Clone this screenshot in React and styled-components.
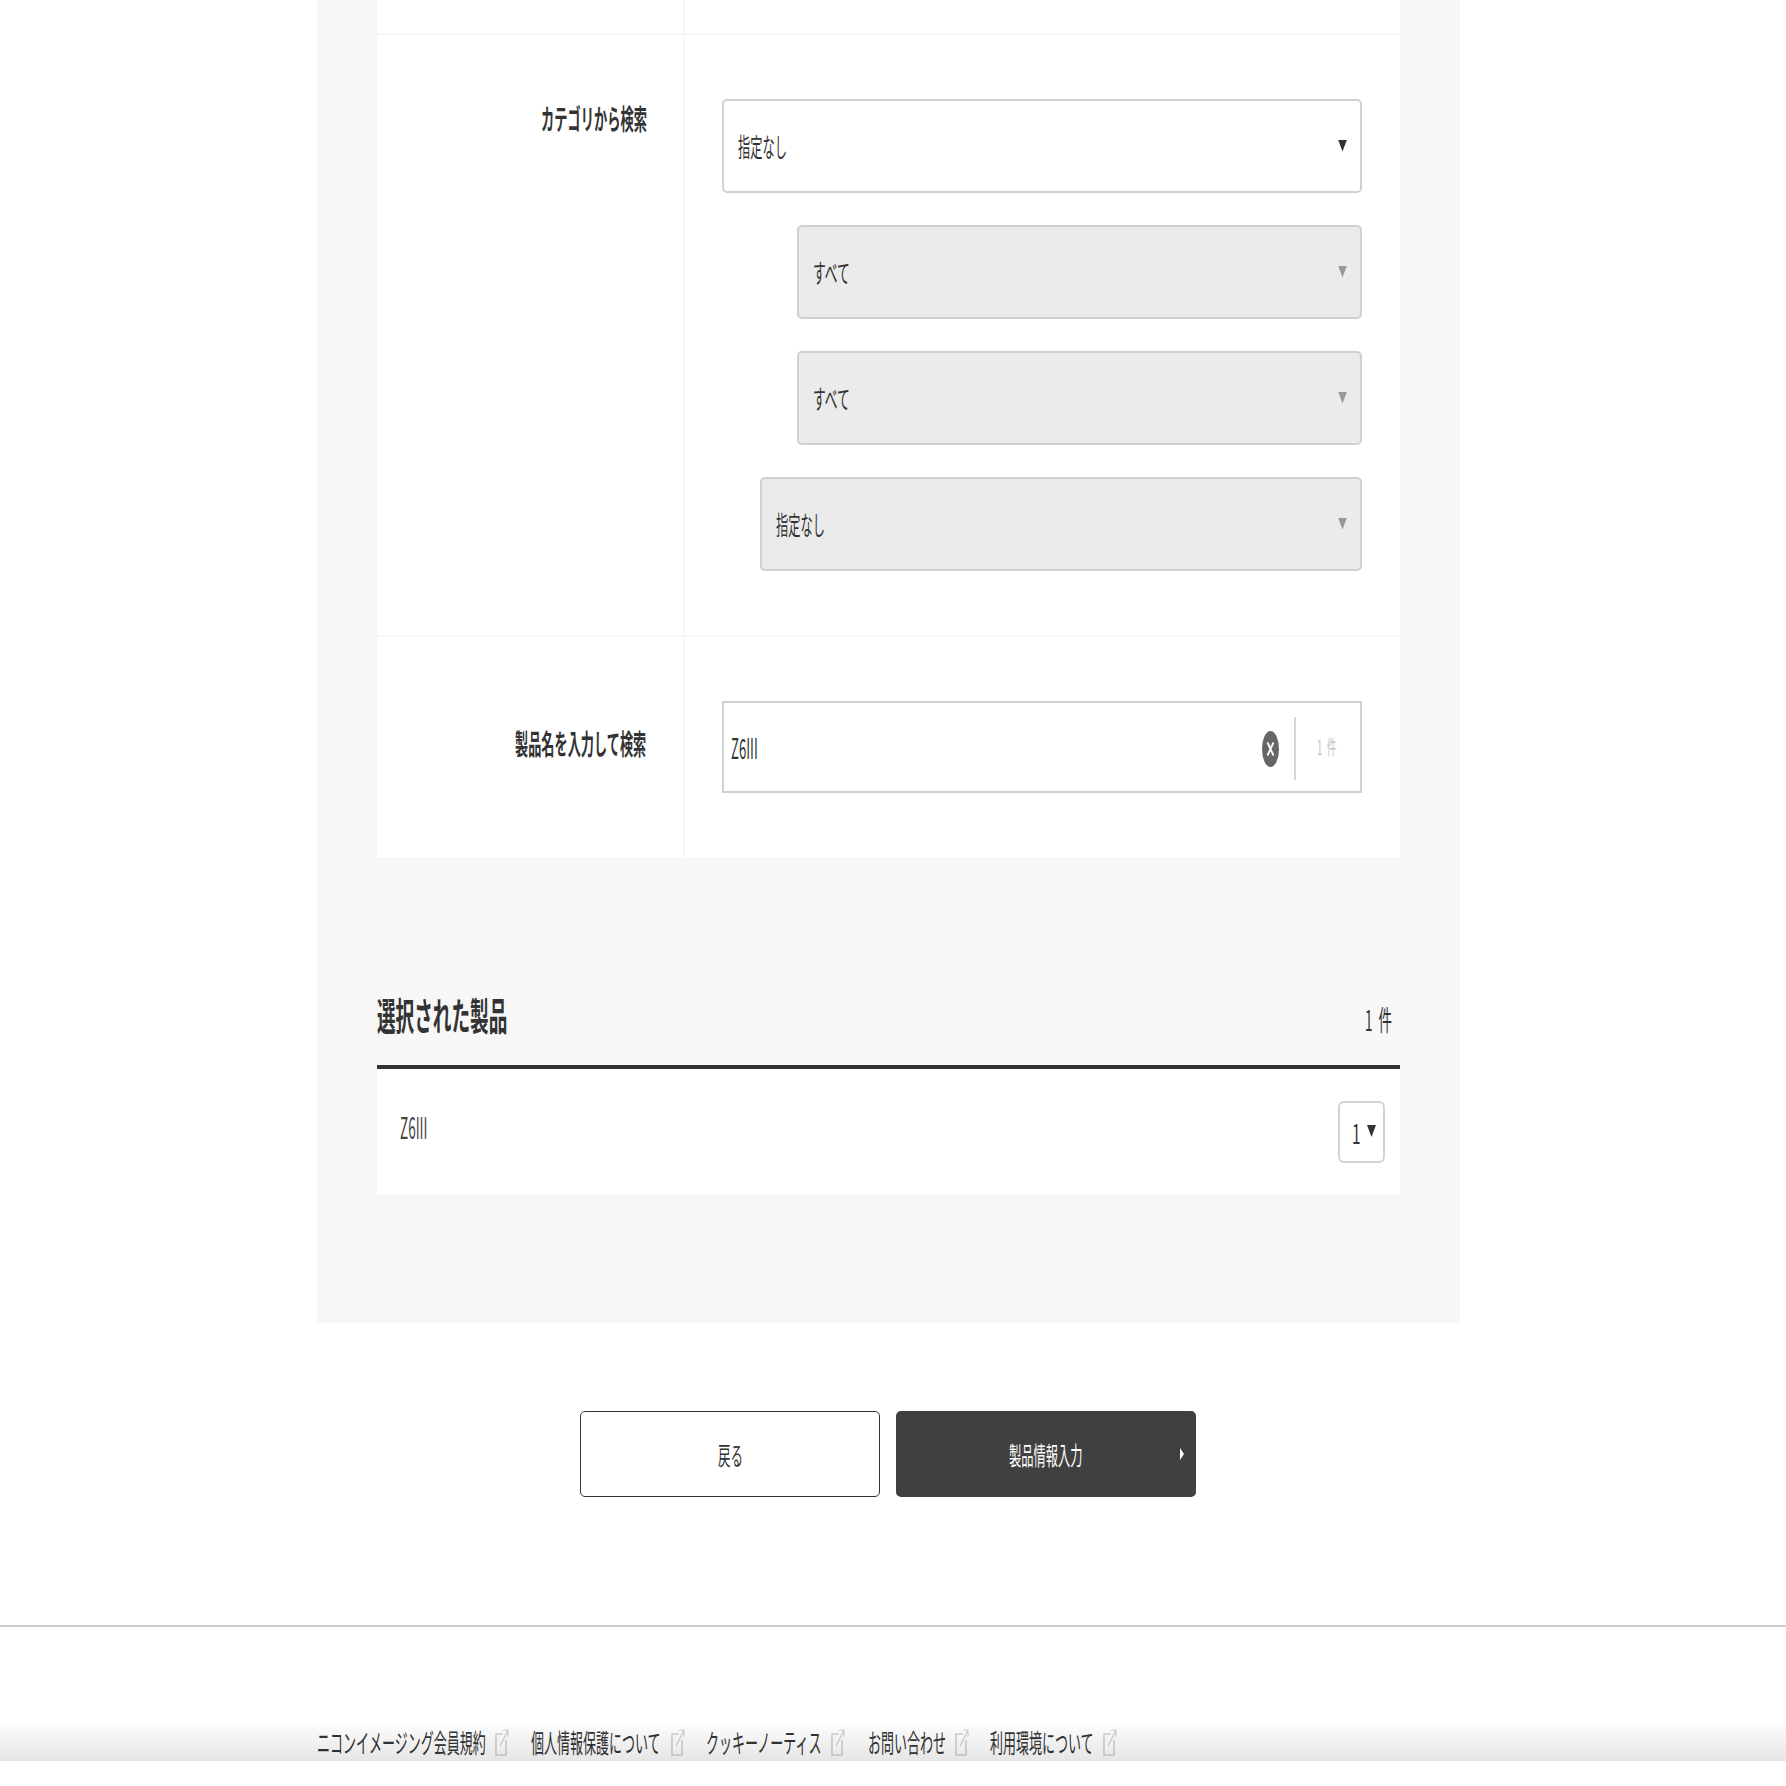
import React from 'react';
import styled, { createGlobalStyle } from 'styled-components';

const GlobalStyle = createGlobalStyle`
  html, body {
    margin: 0;
    padding: 0;
    background: #fff;
  }
  body {
    font-family: "Noto Sans CJK JP", "Noto Sans", sans-serif;
    color: #333;
  }
`;

const App = () => {
  return (
    <Page>
      <GlobalStyle />
      <Panel>
        <Card>
          <Row $h={35}>
            <LabelCol />
            <FieldCol />
          </Row>
          <Row>
            <LabelCol>
              <CategoryLabel $w={106} $sx={0.473}>カテゴリから検索</CategoryLabel>
            </LabelCol>
            <FieldCol>
              <Selects>
                <SelectBox>
                  <SelectText $w={49} $sx={0.47}>指定なし</SelectText>
                  <Arrow />
                </SelectBox>
                <SelectBox $indent={75} $disabled>
                  <SelectText $w={37} $sx={0.49}>すべて</SelectText>
                  <Arrow $disabled />
                </SelectBox>
                <SelectBox $indent={75} $disabled>
                  <SelectText $w={37} $sx={0.49}>すべて</SelectText>
                  <Arrow $disabled />
                </SelectBox>
                <SelectBox $indent={38} $disabled>
                  <SelectText $w={49} $sx={0.47}>指定なし</SelectText>
                  <Arrow $disabled />
                </SelectBox>
              </Selects>
            </FieldCol>
          </Row>
          <Row $last>
            <LabelCol>
              <NameLabel $w={132} $sx={0.47}>製品名を入力して検索</NameLabel>
            </LabelCol>
            <FieldCol>
              <SearchBox>
                <SearchValue $w={27} $sx={0.47}>Z6III</SearchValue>
                <ClearIcon width="17" height="36" viewBox="0 0 17 36">
                  <ellipse cx="8.5" cy="18" rx="8.5" ry="18" fill="#666" />
                  <path d="M5.5 11.5 L11.5 24.5 M11.5 11.5 L5.5 24.5" stroke="#fff" strokeWidth="1.8" fill="none" />
                </ClearIcon>
                <SearchCount>
                  <CountText $w={20} $sx={0.48}>1  件</CountText>
                </SearchCount>
              </SearchBox>
            </FieldCol>
          </Row>
        </Card>

        <SelectedHead>
          <SelectedTitle $w={131} $sx={0.49}>選択された製品</SelectedTitle>
          <SelectedCount $w={26} $sx={0.48}>1  件</SelectedCount>
        </SelectedHead>
        <SelectedList>
          <ProductName $w={27} $sx={0.45}>Z6III</ProductName>
          <QtyBox>
            <QtyText $w={6} $sx={0.55}>1</QtyText>
            <QtyArrow />
          </QtyBox>
        </SelectedList>
      </Panel>

      <Buttons>
        <BackButton>
          <ButtonText $w={25} $sx={0.5}>戻る</ButtonText>
        </BackButton>
        <NextButton>
          <ButtonText $w={74} $sx={0.49}>製品情報入力</ButtonText>
          <NextArrow />
        </NextButton>
      </Buttons>

      <FooterRule />

      <FooterLinks>
        <FooterLink $gap={22}>
          <FooterText $w={169} $sx={0.5}>ニコンイメージング会員規約</FooterText>
          <ExternalIcon />
        </FooterLink>
        <FooterLink $gap={21}>
          <FooterText $w={131} $sx={0.5}>個人情報保護について</FooterText>
          <ExternalIcon />
        </FooterLink>
        <FooterLink $gap={23}>
          <FooterText $w={116} $sx={0.5}>クッキーノーティス</FooterText>
          <ExternalIcon />
        </FooterLink>
        <FooterLink $gap={21}>
          <FooterText $w={78} $sx={0.5}>お問い合わせ</FooterText>
          <ExternalIcon />
        </FooterLink>
        <FooterLink>
          <FooterText $w={104} $sx={0.5}>利用環境について</FooterText>
          <ExternalIcon />
        </FooterLink>
      </FooterLinks>

      <BottomFade />
    </Page>
  );
};

const ExternalIcon = () => (
  <ExternalSvg width="14" height="28" viewBox="0 0 14 28">
    <path d="M8 6 H1 V27 H11 V12" fill="none" stroke="#d0d0d0" strokeWidth="1.5" />
    <path d="M5 18 L13 2 M8 2 H13 V9" fill="none" stroke="#d0d0d0" strokeWidth="1.2" />
  </ExternalSvg>
);

// the whole shot is squeezed sideways, so every text is narrowed and keeps $w as its flow width
const Squeezed = styled.span`
  display: block;
  flex: none;
  white-space: pre;
  width: ${(p) => p.$w / p.$sx}px;
  margin-right: ${(p) => p.$w - p.$w / p.$sx}px;
  transform: scaleX(${(p) => p.$sx});
  transform-origin: left center;
`;

const Page = styled.div`
  position: relative;
  width: 1786px;
  height: 1786px;
  overflow: hidden;
  background: #fff;
`;

const Panel = styled.div`
  width: 1143px;
  height: 1323px;
  margin-left: 317px;
  padding: 0 60px;
  box-sizing: border-box;
  background: #f7f7f7;
`;

const Card = styled.div`
  background: #fff;
`;

const Row = styled.div`
  display: grid;
  grid-template-columns: 308px 1fr;
  height: ${(p) => (p.$h ? `${p.$h}px` : 'auto')};
  border-bottom: ${(p) => (p.$last ? 'none' : '2px solid #f6f6f6')};
  box-sizing: border-box;
`;

const LabelCol = styled.div`
  display: flex;
  justify-content: flex-end;
  padding-right: 36px;
  border-right: 2px solid #f8f8f8;
`;

const FieldCol = styled.div`
  padding: 0 38px 0 37px;
`;

const CategoryLabel = styled(Squeezed)`
  font-size: 28px;
  font-weight: 700;
  line-height: 36px;
  color: #333;
  margin-top: 65px;
`;

const NameLabel = styled(Squeezed)`
  font-size: 28px;
  font-weight: 700;
  line-height: 36px;
  color: #333;
  margin-top: 88px;
`;

const Selects = styled.div`
  display: flex;
  flex-direction: column;
  gap: 32px;
  padding: 64px 0;
`;

const SelectBox = styled.div`
  display: flex;
  align-items: center;
  justify-content: space-between;
  height: 94px;
  margin-left: ${(p) => p.$indent || 0}px;
  padding: 0 13px 0 14px;
  box-sizing: border-box;
  border: 2px solid #d0d0d0;
  border-radius: 5px;
  background: ${(p) => (p.$disabled ? '#ebebeb' : '#fff')};
`;

const SelectText = styled(Squeezed)`
  font-size: 26px;
  line-height: 36px;
  color: #333;
`;

const Arrow = styled.i`
  display: block;
  width: 9px;
  height: 12px;
  margin-top: -1px;
  clip-path: polygon(0 0, 100% 0, 50% 100%);
  background: ${(p) => (p.$disabled ? '#999' : '#333')};
`;

const SearchBox = styled.div`
  display: flex;
  align-items: center;
  height: 92px;
  margin: 64px 0 64px;
  padding-left: 7px;
  box-sizing: border-box;
  border: 2px solid #d0d0d0;
`;

const SearchValue = styled(Squeezed)`
  font-size: 28px;
  line-height: 36px;
  color: #333;
`;

const ClearIcon = styled.svg`
  flex: none;
  margin: 3px 0 0 auto;
`;

const SearchCount = styled.div`
  display: flex;
  align-items: center;
  height: 63px;
  width: 66px;
  margin: 3px 0 0 15px;
  padding-left: 21px;
  box-sizing: border-box;
  border-left: 2px solid #d6d6d6;
`;

const CountText = styled(Squeezed)`
  font-size: 20px;
  line-height: 30px;
  color: #c4c4c4;
  margin-top: -3px;
`;

const SelectedHead = styled.div`
  display: flex;
  align-items: flex-end;
  justify-content: space-between;
  height: 212px;
  padding-right: 9px;
  border-bottom: 4px solid #333;
  box-sizing: border-box;
`;

const SelectedTitle = styled(Squeezed)`
  font-size: 38px;
  font-weight: 700;
  line-height: 48px;
  color: #333;
  margin-bottom: 27px;
`;

const SelectedCount = styled(Squeezed)`
  font-size: 28px;
  line-height: 36px;
  color: #333;
  margin-bottom: 28px;
`;

const SelectedList = styled.div`
  display: flex;
  align-items: flex-start;
  justify-content: space-between;
  height: 126px;
  padding: 32px 15px 0 23px;
  box-sizing: border-box;
  background: #fff;
`;

const ProductName = styled(Squeezed)`
  font-size: 30px;
  line-height: 36px;
  color: #444;
  margin-top: 7px;
`;

const QtyBox = styled.div`
  display: flex;
  align-items: center;
  width: 47px;
  height: 62px;
  padding-left: 12px;
  box-sizing: border-box;
  border: 2px solid #d2d2d2;
  border-radius: 6px;
`;

const QtyText = styled(Squeezed)`
  font-size: 28px;
  line-height: 36px;
  color: #333;
  margin-top: -1px;
`;

const QtyArrow = styled.i`
  display: block;
  width: 9px;
  height: 12px;
  margin-left: 9px;
  margin-top: -2px;
  clip-path: polygon(0 0, 100% 0, 50% 100%);
  background: #333;
`;

const Buttons = styled.div`
  display: flex;
  justify-content: center;
  gap: 16px;
  margin-top: 88px;
  padding-right: 10px;
`;

const BaseButton = styled.div`
  position: relative;
  display: flex;
  align-items: center;
  justify-content: center;
  width: 300px;
  height: 86px;
  box-sizing: border-box;
  border-radius: 5px;
`;

const BackButton = styled(BaseButton)`
  border: 1.5px solid #333;
  background: #fff;
  color: #333;
`;

const NextButton = styled(BaseButton)`
  background: #404040;
  color: #fff;
`;

const ButtonText = styled(Squeezed)`
  font-size: 25px;
  line-height: 36px;
  color: inherit;
`;

const NextArrow = styled.i`
  position: absolute;
  right: 12px;
  top: 37px;
  width: 4px;
  height: 12px;
  clip-path: polygon(0 0, 100% 50%, 0 100%);
  background: #fff;
`;

const FooterRule = styled.div`
  height: 2px;
  margin-top: 128px;
  background: #ccc;
`;

const FooterLinks = styled.div`
  display: flex;
  align-items: center;
  margin: 97px 0 0 317px;
`;

const FooterLink = styled.div`
  display: flex;
  align-items: center;
  gap: 9px;
  margin-right: ${(p) => p.$gap || 0}px;
`;

const FooterText = styled(Squeezed)`
  font-size: 26px;
  line-height: 36px;
  color: #333;
`;

const ExternalSvg = styled.svg`
  flex: none;
`;

const BottomFade = styled.div`
  position: absolute;
  left: 0;
  right: 0;
  bottom: 25px;
  height: 41px;
  background: linear-gradient(to bottom, rgba(0, 0, 0, 0), rgba(0, 0, 0, 0.1));
  pointer-events: none;
`;

export default App;
